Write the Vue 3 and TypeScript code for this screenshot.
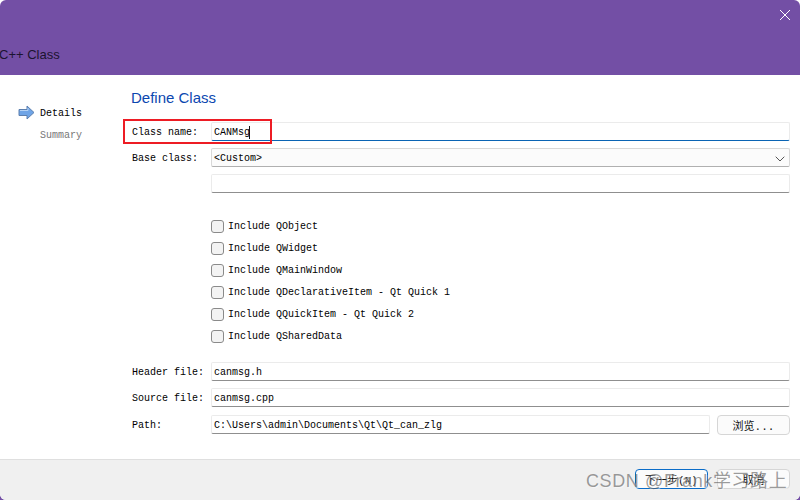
<script setup lang="ts">
const includes = [
  'Include QObject',
  'Include QWidget',
  'Include QMainWindow',
  'Include QDeclarativeItem - Qt Quick 1',
  'Include QQuickItem - Qt Quick 2',
  'Include QSharedData',
];
</script>

<template>
  <div class="desktop">
    <div class="dialog">
      <header class="title-bar">
        <span class="title">C++ Class</span>
        <svg class="close" width="12" height="12" viewBox="0 0 12 12">
          <path d="M1 1l10 10M11 1L1 11" stroke="#fff" stroke-width="1" fill="none" />
        </svg>
      </header>

      <div class="body">
        <aside class="steps">
          <div class="step current">
            <svg class="arrow" width="17" height="15" viewBox="0 0 17 15">
              <path d="M1 4.5h8V1l7 6.5L9 14v-3.5H1z" fill="#6fa4e6" stroke="#5c7fae" stroke-width="1" />
              <path d="M2 5.5h8V3" fill="none" stroke="#b5d2f4" stroke-width="1" />
            </svg>
            <span>Details</span>
          </div>
          <div class="step muted"><span>Summary</span></div>
        </aside>

        <main class="form">
          <h1 class="heading">Define Class</h1>

          <div class="row">
            <label>Class name:</label>
            <div class="field focused">CANMsg<i class="caret"></i></div>
          </div>
          <div class="row">
            <label>Base class:</label>
            <div class="field combo">
              &lt;Custom&gt;
              <svg class="chevron" width="10" height="6" viewBox="0 0 10 6">
                <path d="M.7.7L5 5l4.3-4.3" stroke="#555" stroke-width="1" fill="none" />
              </svg>
            </div>
          </div>
          <div class="row">
            <label></label>
            <div class="field"></div>
          </div>

          <ul class="checks">
            <li v-for="item in includes" :key="item">
              <span class="box"></span>{{ item }}
            </li>
          </ul>

          <div class="row">
            <label>Header file:</label>
            <div class="field">canmsg.h</div>
          </div>
          <div class="row path-gap">
            <label>Source file:</label>
            <div class="field">canmsg.cpp</div>
          </div>
          <div class="row">
            <label>Path:</label>
            <div class="field">C:\Users\admin\Documents\Qt\Qt_can_zlg</div>
            <button class="btn browse">浏览...</button>
          </div>
        </main>
      </div>

      <footer class="footer">
        <button class="btn primary">下一步(N)</button>
        <button class="btn">取消</button>
      </footer>

      <div class="highlight"></div>
      <div class="watermark">CSDN @Frank学习路上</div>
    </div>
  </div>
</template>

<style scoped>
.desktop {
  width: 800px;
  height: 500px;
  background: linear-gradient(#fff 0 50%, #734fa5 50%);
}
.dialog {
  position: relative;
  width: 800px;
  height: 500px;
  display: flex;
  flex-direction: column;
  overflow: hidden;
  background: #fff;
  border-radius: 6px;
  font-family: "Liberation Mono", "Noto Sans CJK SC", monospace;
  font-size: 10px;
  color: #000;
}
.title-bar {
  height: 75px;
  flex: none;
  background: #734fa5;
  position: relative;
  display: flex;
  align-items: flex-end;
}
.title {
  font-family: "Liberation Sans", sans-serif;
  font-size: 13px;
  color: #1c1430;
  padding-bottom: 13px;
  margin-left: -1px;
}
.close {
  position: absolute;
  top: 9px;
  right: 9px;
}
.body {
  flex: 1;
  display: flex;
  min-height: 0;
}
.steps {
  width: 131px;
  flex: none;
  padding: 27px 0 0 18px;
  box-sizing: border-box;
}
.step {
  height: 22px;
  display: flex;
  align-items: center;
  padding-left: 22px;
  position: relative;
}
.step.muted {
  color: #777;
}
.arrow {
  position: absolute;
  left: 0;
  top: 3px;
}
.form {
  flex: 1;
  padding: 13px 10px 0 0;
}
.heading {
  margin: 0 0 15px;
  font-family: "Liberation Sans", sans-serif;
  font-size: 15px;
  font-weight: 400;
  line-height: 19px;
  color: #0b47b0;
}
.row {
  display: flex;
  align-items: center;
  height: 19px;
  margin-bottom: 7px;
}
.row.path-gap {
  margin-bottom: 8px;
}
.row label {
  width: 80px;
  flex: none;
  padding: 2px 0 0 1px;
  box-sizing: border-box;
}
.field {
  flex: 1;
  height: 19px;
  box-sizing: border-box;
  display: flex;
  align-items: center;
  padding: 2px 0 0 2px;
  position: relative;
  background: #fff;
  border: 1px solid #ebebeb;
  border-bottom-color: #8f8f8f;
  border-radius: 2px;
}
.field.focused {
  border-bottom-color: #0a64b4;
}
.field.combo {
  background: #fbfbfb;
  border-color: #d8d8d8;
  border-bottom-color: #b0b0b0;
}
.caret {
  width: 1px;
  height: 13px;
  margin-left: -1px;
  background: #111;
}
.chevron {
  position: absolute;
  right: 4px;
  top: 7px;
}
.checks {
  list-style: none;
  margin: 22px 0 15px 80px;
  padding: 0;
}
.checks li {
  height: 22px;
  display: flex;
  align-items: center;
}
.box {
  width: 11px;
  height: 11px;
  margin-right: 4px;
  border: 1px solid #8a8a8a;
  border-radius: 3px;
  background: #f3f3f3;
}
.btn {
  width: 73px;
  height: 20px;
  padding: 0;
  font-family: "Liberation Mono", "Noto Sans CJK SC", monospace;
  font-size: 11px;
  color: #111;
  background: #fbfbfb;
  border: 1px solid #d6d6d6;
  border-radius: 4px;
}
.browse {
  margin-left: 7px;
  flex: none;
}
.footer {
  height: 41px;
  flex: none;
  box-sizing: border-box;
  background: #f0f0f0;
  border-top: 1px solid #dfdfdf;
  display: flex;
  justify-content: flex-end;
  gap: 9px;
  padding: 9px 10px 0 0;
}
.primary {
  border: 1px solid #0a6cc8;
}
.highlight {
  position: absolute;
  left: 123px;
  top: 119px;
  width: 149px;
  height: 25px;
  box-sizing: border-box;
  border: 2px solid #ed1c24;
}
.watermark {
  position: absolute;
  left: 586px;
  top: 469px;
  font-family: "Liberation Sans", "Noto Sans CJK SC", sans-serif;
  font-size: 18px;
  line-height: 24px;
  letter-spacing: 0.6px;
  white-space: nowrap;
  color: rgba(90, 90, 90, 0.6);
  text-shadow: 1px 1px 0 rgba(255, 255, 255, 0.45);
}
</style>
